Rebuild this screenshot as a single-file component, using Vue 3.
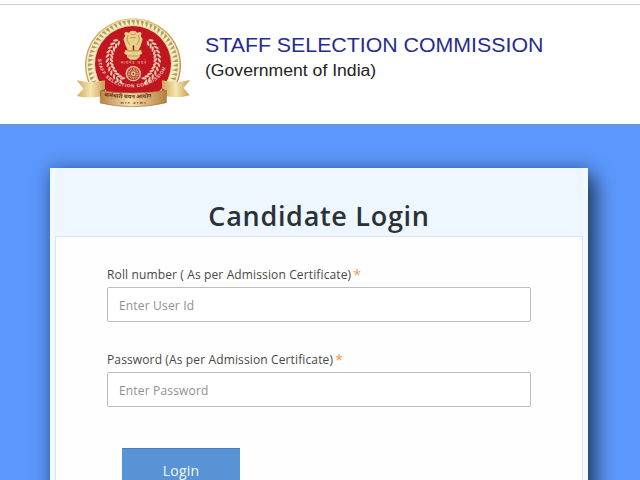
<template>
  <div class="page">
    <header class="site-header">
      <svg class="emblem" viewBox="18 48 348 282" role="img" aria-label="Staff Selection Commission">
        <defs>
          <linearGradient id="gold" x1="0" y1="0" x2="1" y2="0">
            <stop offset="0" stop-color="#c9a255" />
            <stop offset="0.5" stop-color="#e9d591" />
            <stop offset="1" stop-color="#b98c42" />
          </linearGradient>
          <linearGradient id="tail" x1="0" y1="0" x2="1" y2="0">
            <stop offset="0" stop-color="#cfa75c" />
            <stop offset="0.5" stop-color="#f5e6b0" />
            <stop offset="1" stop-color="#c79c54" />
          </linearGradient>
          <linearGradient id="ribbon" x1="0" y1="0" x2="1" y2="0">
            <stop offset="0" stop-color="#b98246" />
            <stop offset="0.45" stop-color="#f7e2ae" />
            <stop offset="1" stop-color="#b67f42" />
          </linearGradient>
          <clipPath id="aboveRibbon"><path d="M18 48 H366 V286 H18 Z" /></clipPath>
          <path id="motto" d="M84 176 C86 292 292 292 294 170" />
          <path id="ribbonCurve" d="M103 289 Q190 303 280 287" />
        </defs>

        <!-- outer ring with the toothed border -->
        <g clip-path="url(#aboveRibbon)">
          <ellipse cx="189" cy="196" rx="144" ry="141" fill="url(#gold)" />
          <ellipse cx="189" cy="196" rx="140" ry="137" fill="#f3ecca" />
          <path v-for="(tooth, i) in teeth" :key="i" :d="tooth" fill="#b59d58" />
          <ellipse cx="189" cy="191" rx="118" ry="117" fill="#efdfa6" />
          <ellipse cx="189" cy="192" rx="114" ry="114" fill="#c01620" />
        </g>

        <!-- laurel branches -->
        <g v-for="side in [1, -1]" :key="side" :transform="side < 0 ? 'translate(380 0) scale(-1 1)' : undefined">
          <ellipse
            v-for="(leaf, i) in leaves"
            :key="i"
            cx="0"
            cy="0"
            rx="8"
            ry="3.2"
            fill="#f2cdb4"
            :transform="`translate(${leaf.x} ${leaf.y}) rotate(${leaf.r})`"
          />
        </g>

        <!-- lion capital -->
        <g fill="#ead08b">
          <path d="M166 108 Q160 98 168 96 L177 98 Q179 92 189 92 Q199 92 201 98 L210 96 Q218 98 212 108 L218 117 L212 137 L206 150 H173 L167 137 L160 117 Z" />
          <path d="M165 151 H214 L216 161 L209 165 V172 H171 V165 L163 161 Z" />
          <path d="M172 171 H208 L199 179 H180 Z" />
        </g>
        <path class="capital-lines" d="M174 104 L171 120 L179 135 M205 104 L208 120 L200 135 M181 101 Q190 108 198 101 M180 113 H198 M172 153 H208 M174 168 H205" />
        <path d="M188 136 H193 V151 H188 Z" fill="#6c4523" />
        <text class="devanagari" x="190" y="193" text-anchor="middle" textLength="76">सत्यमेव जयते</text>

        <!-- wheel -->
        <circle cx="190" cy="221" r="23" fill="#efc9a0" />
        <circle cx="190" cy="221" r="19" fill="#b8392d" />
        <circle class="spokes" cx="190" cy="221" r="13" />
        <circle cx="190" cy="221" r="7" fill="#f3d5a8" />
        <circle cx="190" cy="221" r="3" fill="#87291e" />

        <text class="motto"><textPath href="#motto" startOffset="1">STAFF SELECTION COMMISSION</textPath></text>

        <!-- ribbon -->
        <path d="M20 241 Q60 252 105 241 V286 Q60 298 21 288 L40 266 Z" fill="url(#tail)" />
        <path d="M360 240 Q320 252 276 241 V286 Q322 298 359 286 L341 264 Z" fill="url(#tail)" />
        <path d="M91 274 L105 267 V286 L91 290 Z M289 272 L276 265 V286 L289 290 Z" fill="#8e5a2c" />
        <path d="M91 272 Q190 287 289 271 V308 Q190 332 91 309 Z" fill="url(#ribbon)" stroke="#a8713a" stroke-width="2" />
        <text class="ribbon-text"><textPath href="#ribbonCurve">कर्मचारी चयन आयोग</textPath></text>
        <text class="ribbon-small" x="189" y="312" text-anchor="middle" textLength="76">भारत सरकार</text>
      </svg>
      <div class="org">
        <div class="org-name">STAFF SELECTION COMMISSION</div>
        <div class="org-sub">(Government of India)</div>
      </div>
    </header>

    <main class="content">
      <div class="login-card">
        <h1 class="card-title">Candidate Login</h1>
        <form class="card-body" @submit.prevent>
          <div v-for="field in fields" :key="field.id" class="form-group">
            <label :for="field.id" class="form-label">
              <span>{{ field.label }}</span><span class="required">*</span>
            </label>
            <input
              :id="field.id"
              v-model="field.value"
              :type="field.type"
              class="form-input"
              :placeholder="field.placeholder"
            />
          </div>
          <button type="submit" class="login-button">Login</button>
        </form>
      </div>
    </main>
  </div>
</template>

<script setup>
import { ref } from 'vue'

const fields = ref([
  {
    id: 'roll',
    label: 'Roll number ( As per Admission Certificate)',
    placeholder: 'Enter User Id',
    type: 'text',
    value: ''
  },
  {
    id: 'password',
    label: 'Password (As per Admission Certificate)',
    placeholder: 'Enter Password',
    type: 'password',
    value: ''
  }
])

// Paired leaves along the left branch, mirrored for the right one
const leaves = []
for (let i = 0; i < 12; i++) {
  const deg = 118 + i * 10
  const a = (deg * Math.PI) / 180
  for (const [radius, tilt] of [[65, 55], [77, 125]]) {
    leaves.push({
      x: Math.round(189 + radius * Math.cos(a)),
      y: Math.round(178 + radius * Math.sin(a)),
      r: deg + tilt
    })
  }
}

// Triangular teeth around the rim, pointing inwards
const point = (deg, r) => {
  const a = (deg * Math.PI) / 180
  return `${(189 + r * Math.cos(a)).toFixed(1)} ${(195 + r * Math.sin(a)).toFixed(1)}`
}
const teeth = []
for (let deg = 0; deg < 360; deg += 6) {
  teeth.push(`M${point(deg - 2.2, 135)} L${point(deg + 2.2, 135)} L${point(deg + 1.5, 118)} Z`)
}
</script>

<style>
body {
  background: #5c98fb;
  overflow: hidden;
}
</style>

<style scoped>
.page {
  display: flow-root;
  width: 100%;
  height: 480px;
  overflow: hidden;
  font-family: 'Open Sans', sans-serif;
  background: linear-gradient(#fefffe 4px, #5c98fb 4px);
}

.site-header {
  display: flex;
  align-items: flex-start;
  box-sizing: border-box;
  height: 121px;
  margin-top: 4px;
  padding: 11px 0 0 76px;
  background: #fefffe;
  border-top: 1px solid #cfcfcf;
  border-bottom: 1px solid #7898cf;
}

.emblem {
  flex: none;
  width: 116px;
  height: 94px;
}

.capital-lines {
  fill: none;
  stroke: #b48d49;
  stroke-width: 2.5;
}

.spokes {
  fill: none;
  stroke: #efd09c;
  stroke-width: 7;
  stroke-dasharray: 2 2.5;
}

.devanagari {
  font: 12px 'Noto Sans', sans-serif;
  fill: #f0a68f;
}

.motto {
  font: bold 14px 'Liberation Sans', sans-serif;
  letter-spacing: 1.9px;
  fill: #f9d9c6;
}

.ribbon-text {
  font: bold 17px 'Noto Sans', sans-serif;
  fill: #70331c;
}

.ribbon-small {
  font: bold 9px 'Noto Sans', sans-serif;
  fill: #85451f;
}

.org {
  padding: 16px 0 0 13px;
  font-family: 'Liberation Sans', Arial, sans-serif;
  white-space: nowrap;
}

.org-name {
  font-size: 20px;
  line-height: 26px;
  color: #272b91;
  transform: scaleX(1.066);
  transform-origin: 0 0;
}

.org-sub {
  font-size: 16px;
  line-height: 26px;
  color: #222;
  transform: scaleX(1.1);
  transform-origin: 0 0;
}

.content {
  padding: 43px 52px 0 50px;
}

.login-card {
  box-sizing: border-box;
  height: 360px;
  padding: 0 5px;
  background: #f0f9ff;
  box-shadow: 8px 10px 18px 0 rgba(20, 35, 55, 0.7), 0 0 16px rgba(20, 45, 90, 0.4);
}

.card-title {
  box-sizing: border-box;
  height: 68px;
  margin: 0;
  padding-top: 29px;
  font-size: 27px;
  font-weight: 600;
  line-height: 38px;
  text-align: center;
  letter-spacing: 0.7px;
  color: #293237;
  background: #eef6ff;
}

.card-body {
  box-sizing: border-box;
  height: 292px;
  padding: 28px 51px 0;
  background: #fefefe;
  border: 1px solid #dfe5e9;
}

.form-group {
  height: 85px;
}

.form-label {
  display: flex;
  height: 22px;
  font-size: 12px;
  line-height: 19px;
  letter-spacing: 0.13px;
  color: #484848;
}

.required {
  margin-left: 2px;
  font-size: 14px;
  color: #f09a4a;
}

.form-input {
  display: block;
  box-sizing: border-box;
  width: 424px;
  height: 35px;
  padding: 1px 12px 0 11px;
  font: 12px 'Open Sans', sans-serif;
  letter-spacing: 0.17px;
  color: #555;
  background: #fff;
  border: 1px solid #bcbcbc;
  border-radius: 2px;
  outline: none;
}

.form-input::placeholder {
  color: #909090;
  opacity: 1;
}

.login-button {
  display: block;
  width: 118px;
  height: 44px;
  margin: 13px 0 0 15px;
  padding: 0;
  font: 14px 'Open Sans', sans-serif;
  letter-spacing: 0.2px;
  color: #f4fbff;
  background: #5793d5;
  border: 0;
  border-top: 1px solid #4781bd;
}
</style>
